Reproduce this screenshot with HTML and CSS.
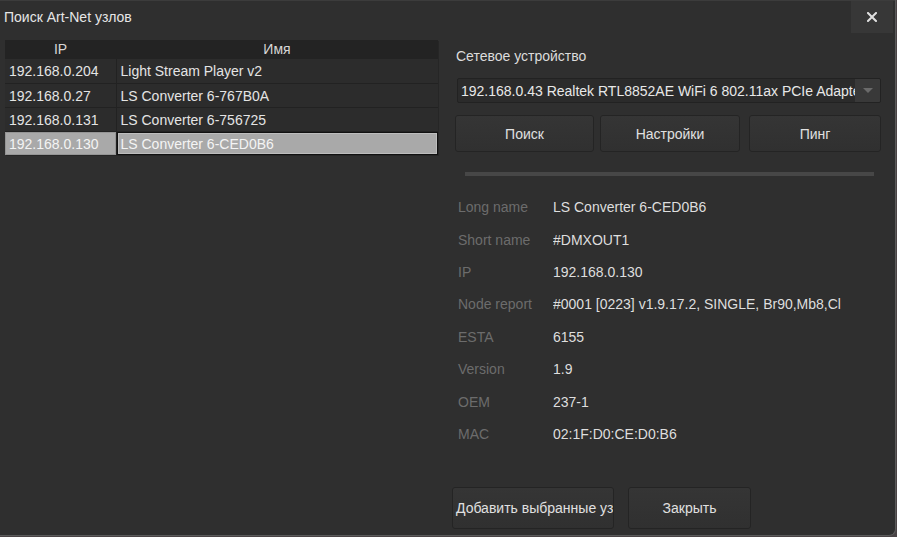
FILE: index.html
```html
<!DOCTYPE html>
<html lang="ru">
<head>
    <meta charset="UTF-8">
    <meta name="viewport" content="width=device-width, initial-scale=1.0">
    <title>Поиск Art-Net узлов</title>
    <link rel="stylesheet" href="styles.css">
</head>
<body>
    <div class="window">
        <div class="titlebar">
            <span class="title">Поиск Art-Net узлов</span>
            <button class="close-btn" title="Закрыть">
                <svg width="10" height="10" viewBox="0 0 10 10">
                    <path d="M1 1 L9 9 M9 1 L1 9" stroke="#e0e0e0" stroke-width="2" stroke-linecap="square"/>
                </svg>
            </button>
        </div>
        <div class="content">
            <div class="node-list">
                <table class="nodes">
                    <thead>
                        <tr><th class="col-ip">IP</th><th>Имя</th></tr>
                    </thead>
                    <tbody>
                        <tr><td>192.168.0.204</td><td>Light Stream Player v2</td></tr>
                        <tr><td>192.168.0.27</td><td>LS Converter 6-767B0A</td></tr>
                        <tr><td>192.168.0.131</td><td>LS Converter 6-756725</td></tr>
                        <tr class="selected"><td>192.168.0.130</td><td class="current">LS Converter 6-CED0B6</td></tr>
                    </tbody>
                </table>
            </div>
            <div class="side">
                <div class="side-label">Сетевое устройство</div>
                <div class="select">
                    <span class="select-value">192.168.0.43 Realtek RTL8852AE WiFi 6 802.11ax PCIe Adapter</span>
                    <span class="select-arrow">
                        <svg width="10" height="6" viewBox="0 0 10 6"><path d="M0 0 H10 L5 5 Z" fill="#6a6a6a"/></svg>
                    </span>
                </div>
                <div class="actions">
                    <button class="btn btn-search">Поиск</button>
                    <button class="btn btn-settings">Настройки</button>
                    <button class="btn btn-ping">Пинг</button>
                </div>
                <div class="progress"></div>
                <div class="info">
                    <div class="info-label">Long name</div><div class="info-value">LS Converter 6-CED0B6</div>
                    <div class="info-label">Short name</div><div class="info-value">#DMXOUT1</div>
                    <div class="info-label">IP</div><div class="info-value">192.168.0.130</div>
                    <div class="info-label">Node report</div><div class="info-value">#0001 [0223] v1.9.17.2, SINGLE, Br90,Mb8,Cl</div>
                    <div class="info-label">ESTA</div><div class="info-value">6155</div>
                    <div class="info-label">Version</div><div class="info-value">1.9</div>
                    <div class="info-label">OEM</div><div class="info-value">237-1</div>
                    <div class="info-label">MAC</div><div class="info-value">02:1F:D0:CE:D0:B6</div>
                </div>
                <div class="footer">
                    <button class="btn btn-add">Добавить выбранные узлы</button>
                    <button class="btn btn-close">Закрыть</button>
                </div>
            </div>
        </div>
    </div>
</body>
</html>
```

FILE: styles.css
```css
body {
    margin: 0;
    background-color: #4a4446;
    font-family: 'Liberation Sans', Arial, sans-serif;
    font-size: 14px;
    color: #e2e2e2;
    overflow: hidden;
}
.window {
    width: 895px;
    height: 535px;
    background-color: #2f2f2f;
    border-right: 1px solid #5a5a5a;
    border-bottom: 1px solid #5a5a5a;
    border-bottom-right-radius: 7px;
    display: flex;
    flex-direction: column;
    overflow: hidden;
}
.titlebar {
    height: 33px;
    display: flex;
    align-items: center;
    justify-content: space-between;
    border-top: 1px solid #3c3c3c;
    box-sizing: border-box;
}
.title {
    padding-left: 4px;
    color: #e6e6e6;
    margin-top: -1px;
}
.close-btn {
    width: 42px;
    height: 32px;
    margin-right: 2px;
    margin-top: -1px;
    border: none;
    background-color: #373737;
    display: flex;
    align-items: center;
    justify-content: center;
    padding: 0;
}
.content {
    flex: 1;
    display: flex;
}
.node-list {
    width: 433px;
    flex-shrink: 0;
    margin: 7px 0 0 5px;
}
.nodes {
    width: 100%;
    border-collapse: collapse;
    table-layout: fixed;
    background-color: #2c2c2c;
    box-shadow: 1px 1px 0 #262626;
}
.nodes th {
    height: 19px;
    padding: 0;
    font-weight: normal;
    color: #d6d6d6;
    background-color: #232323;
    text-align: center;
    line-height: 19px;
}
.nodes .col-ip {
    width: 111px;
}
.nodes td {
    box-sizing: border-box;
    height: 24px;
    padding: 1px 0 0 4px;
    border-bottom: 1px solid #222;
    border-left: 1px solid #222;
    white-space: nowrap;
    overflow: hidden;
    color: #e4e4e4;
}
.nodes td:first-child {
    border-left: none;
}
.nodes tr.selected td {
    background-color: #a9a9a9;
    color: #f4f4f4;
    box-shadow: inset 0 0 0 1px #959595;
    border-bottom: none;
}
.nodes tr.selected td.current {
    box-shadow: inset 0 0 0 1px #111, inset 0 0 0 2px #bdbdbd;
}
.side {
    flex: 1;
    min-width: 0;
    display: flex;
    flex-direction: column;
    padding: 15px 14px 0 17px;
}
.side-label {
    color: #dcdcdc;
    margin-left: 1px;
    height: 17px;
    line-height: 17px;
}
.select {
    margin: 13px 0 0 2px;
    height: 25px;
    box-sizing: border-box;
    border: 1px solid #222;
    border-radius: 2px;
    background-color: #2b2b2b;
    display: flex;
    align-items: center;
    overflow: hidden;
}
.select-value {
    flex: 1;
    min-width: 0;
    padding-left: 3px;
    white-space: nowrap;
    overflow: hidden;
    color: #e8e8e8;
}
.select-arrow {
    width: 25px;
    flex-shrink: 0;
    align-self: stretch;
    background-color: #393939;
    display: flex;
    align-items: center;
    justify-content: center;
}
.actions {
    display: flex;
    margin: 12px 0 0 0;
    gap: 6px;
}
.btn {
    font-family: inherit;
    font-size: 14px;
    color: #e0e0e0;
    background: linear-gradient(#353535, #303030);
    border: 1px solid #242424;
    border-radius: 3px;
    padding: 0;
    white-space: nowrap;
    overflow: hidden;
}
.actions .btn {
    height: 37px;
}
.btn-search {
    width: 139px;
}
.btn-settings {
    width: 140px;
    margin-right: 3px;
}
.btn-ping {
    width: 132px;
}
.progress {
    height: 4px;
    margin: 20px 7px 0 10px;
    background-color: #474747;
}
.info {
    display: grid;
    grid-template-columns: 95px 1fr;
    grid-auto-rows: 32.4px;
    margin-top: 15px;
    margin-left: 3px;
    margin-right: 40px;
    align-items: center;
}
.info-label {
    color: #6c6c6c;
}
.info-value {
    color: #dedede;
    white-space: nowrap;
    overflow: hidden;
}
.footer {
    display: flex;
    gap: 14px;
    margin: 37px 0 0 -3px;
}
.footer .btn {
    height: 42px;
}
.btn-add {
    width: 162px;
    text-align: left;
    padding-left: 3px;
}
.btn-close {
    width: 123px;
}
```
